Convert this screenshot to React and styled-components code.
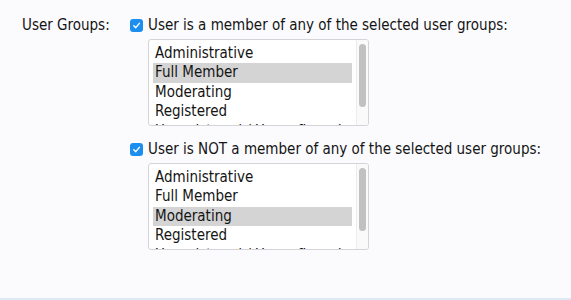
import React from 'react';
import styled, { createGlobalStyle } from 'styled-components';

const GlobalStyle = createGlobalStyle`
  html, body {
    margin: 0;
    padding: 0;
    background: #fbfbfe;
  }
  body {
    font-family: "DejaVu Sans Condensed", "DejaVu Sans", sans-serif;
    font-size: 15px;
    color: #141414;
  }
`;

const Page = styled.div`
  width: 571px;
  height: 300px;
  box-sizing: border-box;
  border-bottom: 2px solid #dde9f5;
  background: #fbfbfe;
`;

const FormRow = styled.div`
  display: grid;
  grid-template-columns: 108px 1fr;
  padding: 16px 0 0 22px;
`;

const Label = styled.div`
  line-height: 18px;
`;

const Options = styled.div`
  display: flex;
  flex-direction: column;
  gap: 14px;
`;

const Option = styled.div`
  display: flex;
  flex-direction: column;
  gap: 5px;
`;

const CheckLine = styled.label`
  display: flex;
  align-items: center;
  gap: 5px;
  line-height: 18px;
`;

const Check = styled.span`
  width: 13px;
  height: 13px;
  border-radius: 3px;
  background: #1b8ef0;
  display: flex;
  align-items: center;
  justify-content: center;
  flex-shrink: 0;
`;

const ListBox = styled.div`
  margin-left: 18px;
  width: 221px;
  height: 87px;
  box-sizing: border-box;
  border: 1px solid #d4d4d8;
  border-radius: 3px;
  background: #fff;
  display: flex;
  overflow: hidden;
`;

const Items = styled.ul`
  list-style: none;
  margin: 0;
  padding: 3.5px 4px 0 4px;
  flex: 1;
  overflow: hidden;
`;

const Item = styled.li`
  height: 19.5px;
  line-height: 19px;
  padding-left: 2px;
  white-space: nowrap;
  background: ${(p) => (p.$selected ? '#d4d4d4' : 'transparent')};
`;

const Track = styled.div`
  width: 12px;
  border-left: 1px solid #ececec;
  background: #fafafa;
  padding: 4px 0 0 2px;
  box-sizing: border-box;
`;

const Thumb = styled.div`
  width: 7px;
  height: 63px;
  border-radius: 4px;
  background: #c1c1c1;
`;

const groups = [
  'Administrative',
  'Full Member',
  'Moderating',
  'Registered',
  'Unregistered / Unconfirmed',
];

const CheckIcon = () => (
  <Check>
    <svg width="9" height="9" viewBox="0 0 10 10">
      <path d="M2 5.2 L4.2 7.4 L8.2 2.6" fill="none" stroke="#fff" strokeWidth="1.6" strokeLinecap="round" strokeLinejoin="round" />
    </svg>
  </Check>
);

const GroupSelect = ({ text, selected }) => (
  <Option>
    <CheckLine>
      <CheckIcon />
      <span>{text}</span>
    </CheckLine>
    <ListBox>
      <Items>
        {groups.map((g) => (
          <Item key={g} $selected={g === selected}>
            {g}
          </Item>
        ))}
      </Items>
      <Track>
        <Thumb />
      </Track>
    </ListBox>
  </Option>
);

const App = () => (
  <Page>
    <GlobalStyle />
    <FormRow>
      <Label>User Groups:</Label>
      <Options>
        <GroupSelect
          text="User is a member of any of the selected user groups:"
          selected="Full Member"
        />
        <GroupSelect
          text="User is NOT a member of any of the selected user groups:"
          selected="Moderating"
        />
      </Options>
    </FormRow>
  </Page>
);

export default App;
